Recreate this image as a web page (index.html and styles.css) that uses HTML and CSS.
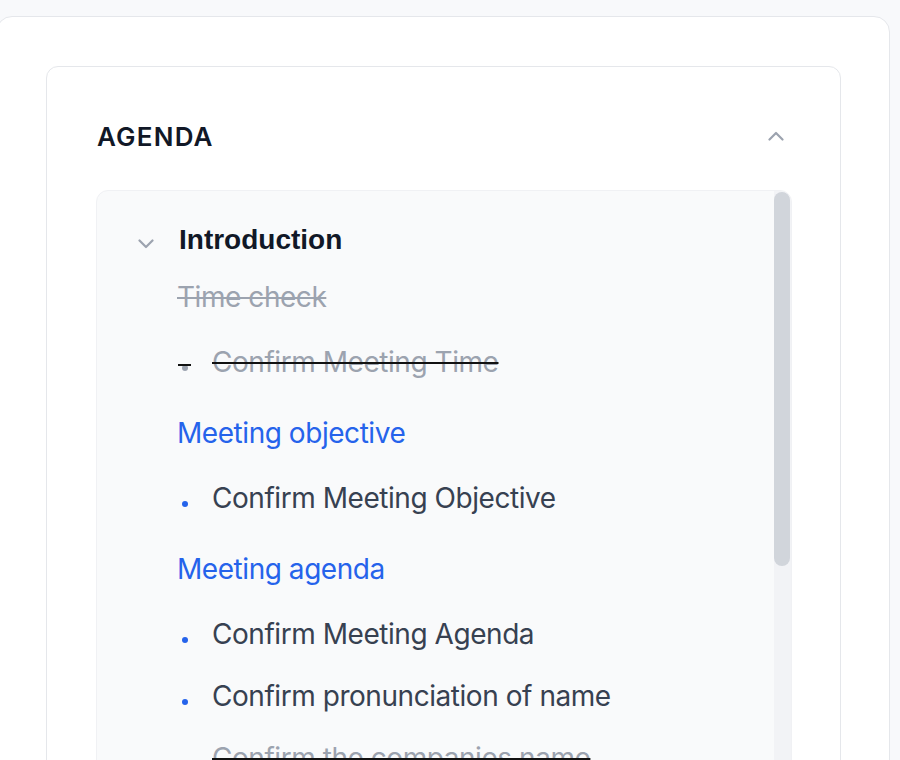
FILE: index.html
```html
<!DOCTYPE html>
<html lang="en">
<head>
<meta charset="utf-8">
<title>Agenda</title>
<link rel="stylesheet" href="styles.css">
</head>
<body>
<div class="page">
  <div class="outer">
    <div class="card">
      <div class="card-head">
        <h2 class="card-title">AGENDA</h2>
        <svg class="chev-up" width="16" height="10" viewBox="0 0 16 10" aria-hidden="true"><path d="M1.5 8.5 L8 2 L14.5 8.5" fill="none" stroke="#9ca3af" stroke-width="2.2" stroke-linecap="round" stroke-linejoin="round"/></svg>
      </div>
      <div class="scroller">
        <div class="content">
          <div class="section-head">
            <svg class="chev-down" width="16" height="10" viewBox="0 0 16 10" aria-hidden="true"><path d="M1.5 1.5 L8 8 L14.5 1.5" fill="none" stroke="#9ca3af" stroke-width="2.2" stroke-linecap="round" stroke-linejoin="round"/></svg>
            <h3 class="section-title">Introduction</h3>
          </div>
          <div class="topics">
            <div class="topic done">Time check</div>
            <ul class="items">
              <li class="item done"><span class="dot"></span><span class="txt">Confirm Meeting Time</span></li>
            </ul>
            <div class="topic">Meeting objective</div>
            <ul class="items">
              <li class="item"><span class="dot"></span><span class="txt">Confirm Meeting Objective</span></li>
            </ul>
            <div class="topic">Meeting agenda</div>
            <ul class="items">
              <li class="item"><span class="dot"></span><span class="txt">Confirm Meeting Agenda</span></li>
              <li class="item"><span class="dot"></span><span class="txt">Confirm pronunciation of name</span></li>
              <li class="item done"><span class="dot"></span><span class="txt">Confirm the companies name</span></li>
            </ul>
          </div>
        </div>
        <div class="track"><div class="thumb"></div></div>
      </div>
    </div>
  </div>
</div>
</body>
</html>
```

FILE: styles.css
```css
html, body {
  margin: 0;
  padding: 0;
}
body {
  background: #f8f9fb;
  height: 760px;
  overflow: hidden;
  font-family: Inter, "Noto Sans", sans-serif;
}
.page {
  padding-top: 16px;
}
.outer {
  margin-left: -4px;
  width: 894px;
  box-sizing: border-box;
  background: #ffffff;
  border: 1px solid #e5e7eb;
  border-radius: 16px;
  padding: 49px 48px 0 49px;
  height: 800px;
}
.card {
  border: 1px solid #e5e7eb;
  border-radius: 12px;
  background: #ffffff;
  padding: 48px 48px 0 49px;
  height: 760px;
  box-sizing: border-box;
}
.card-head {
  display: flex;
  align-items: center;
  justify-content: space-between;
  height: 44px;
  margin-bottom: 31px;
}
.card-title {
  margin: 0;
  padding-left: 1px;
  font-family: Inter, sans-serif;
  font-weight: 600;
  font-size: 26px;
  line-height: 44px;
  letter-spacing: 1.2px;
  color: #111827;
}
.chev-up {
  display: block;
  margin-right: 8px;
  margin-top: -2px;
}
.scroller {
  display: flex;
  height: 640px;
  background: #f9fafb;
  border: 1px solid #f0f1f4;
  border-radius: 12px;
  overflow: hidden;
}
.content {
  flex: 1;
  padding: 29px 0 0 41px;
  overflow: hidden;
}
.section-head {
  display: flex;
  align-items: flex-start;
  gap: 25px;
}
.chev-down {
  display: block;
  margin-top: 19px;
  flex: none;
}
.section-title {
  margin: 0;
  font-family: "Liberation Sans", Arial, sans-serif;
  font-weight: 700;
  font-size: 28px;
  line-height: 40px;
  color: #111827;
}
.topics {
  margin: 17px 0 0 39px;
}
.topic {
  font-size: 28px;
  line-height: 40px;
  letter-spacing: -0.45px;
  color: #2563eb;
}
.topic.done {
  color: #9ca3af;
  text-decoration: line-through;
  text-decoration-color: #9ca3af;
}
.items {
  list-style: none;
  margin: 25px 0 31px 0;
  padding: 0;
}
.item {
  display: flex;
  align-items: flex-start;
  font-size: 28px;
  line-height: 40px;
  letter-spacing: -0.45px;
  color: #374151;
}
.item + .item {
  margin-top: 22px;
}
.dot {
  position: relative;
  flex: none;
  width: 6px;
  height: 6px;
  border-radius: 50%;
  background: #2563eb;
  margin: 23px 24px 0 5px;
}
.item.done .dot {
  background: #9ca3af;
}
.item.done .dot::after {
  content: "";
  position: absolute;
  left: -4px;
  top: -1px;
  width: 13px;
  height: 2px;
  background: #111111;
}
.item.done .txt {
  color: #9ca3af;
  text-decoration: line-through;
  text-decoration-color: #111111;
  text-decoration-thickness: 2px;
}
.track {
  flex: none;
  width: 17px;
  background: #f2f3f6;
  padding-top: 1px;
}
.thumb {
  width: 16px;
  height: 374px;
  border-radius: 8px;
  background: #d1d5db;
}
```
